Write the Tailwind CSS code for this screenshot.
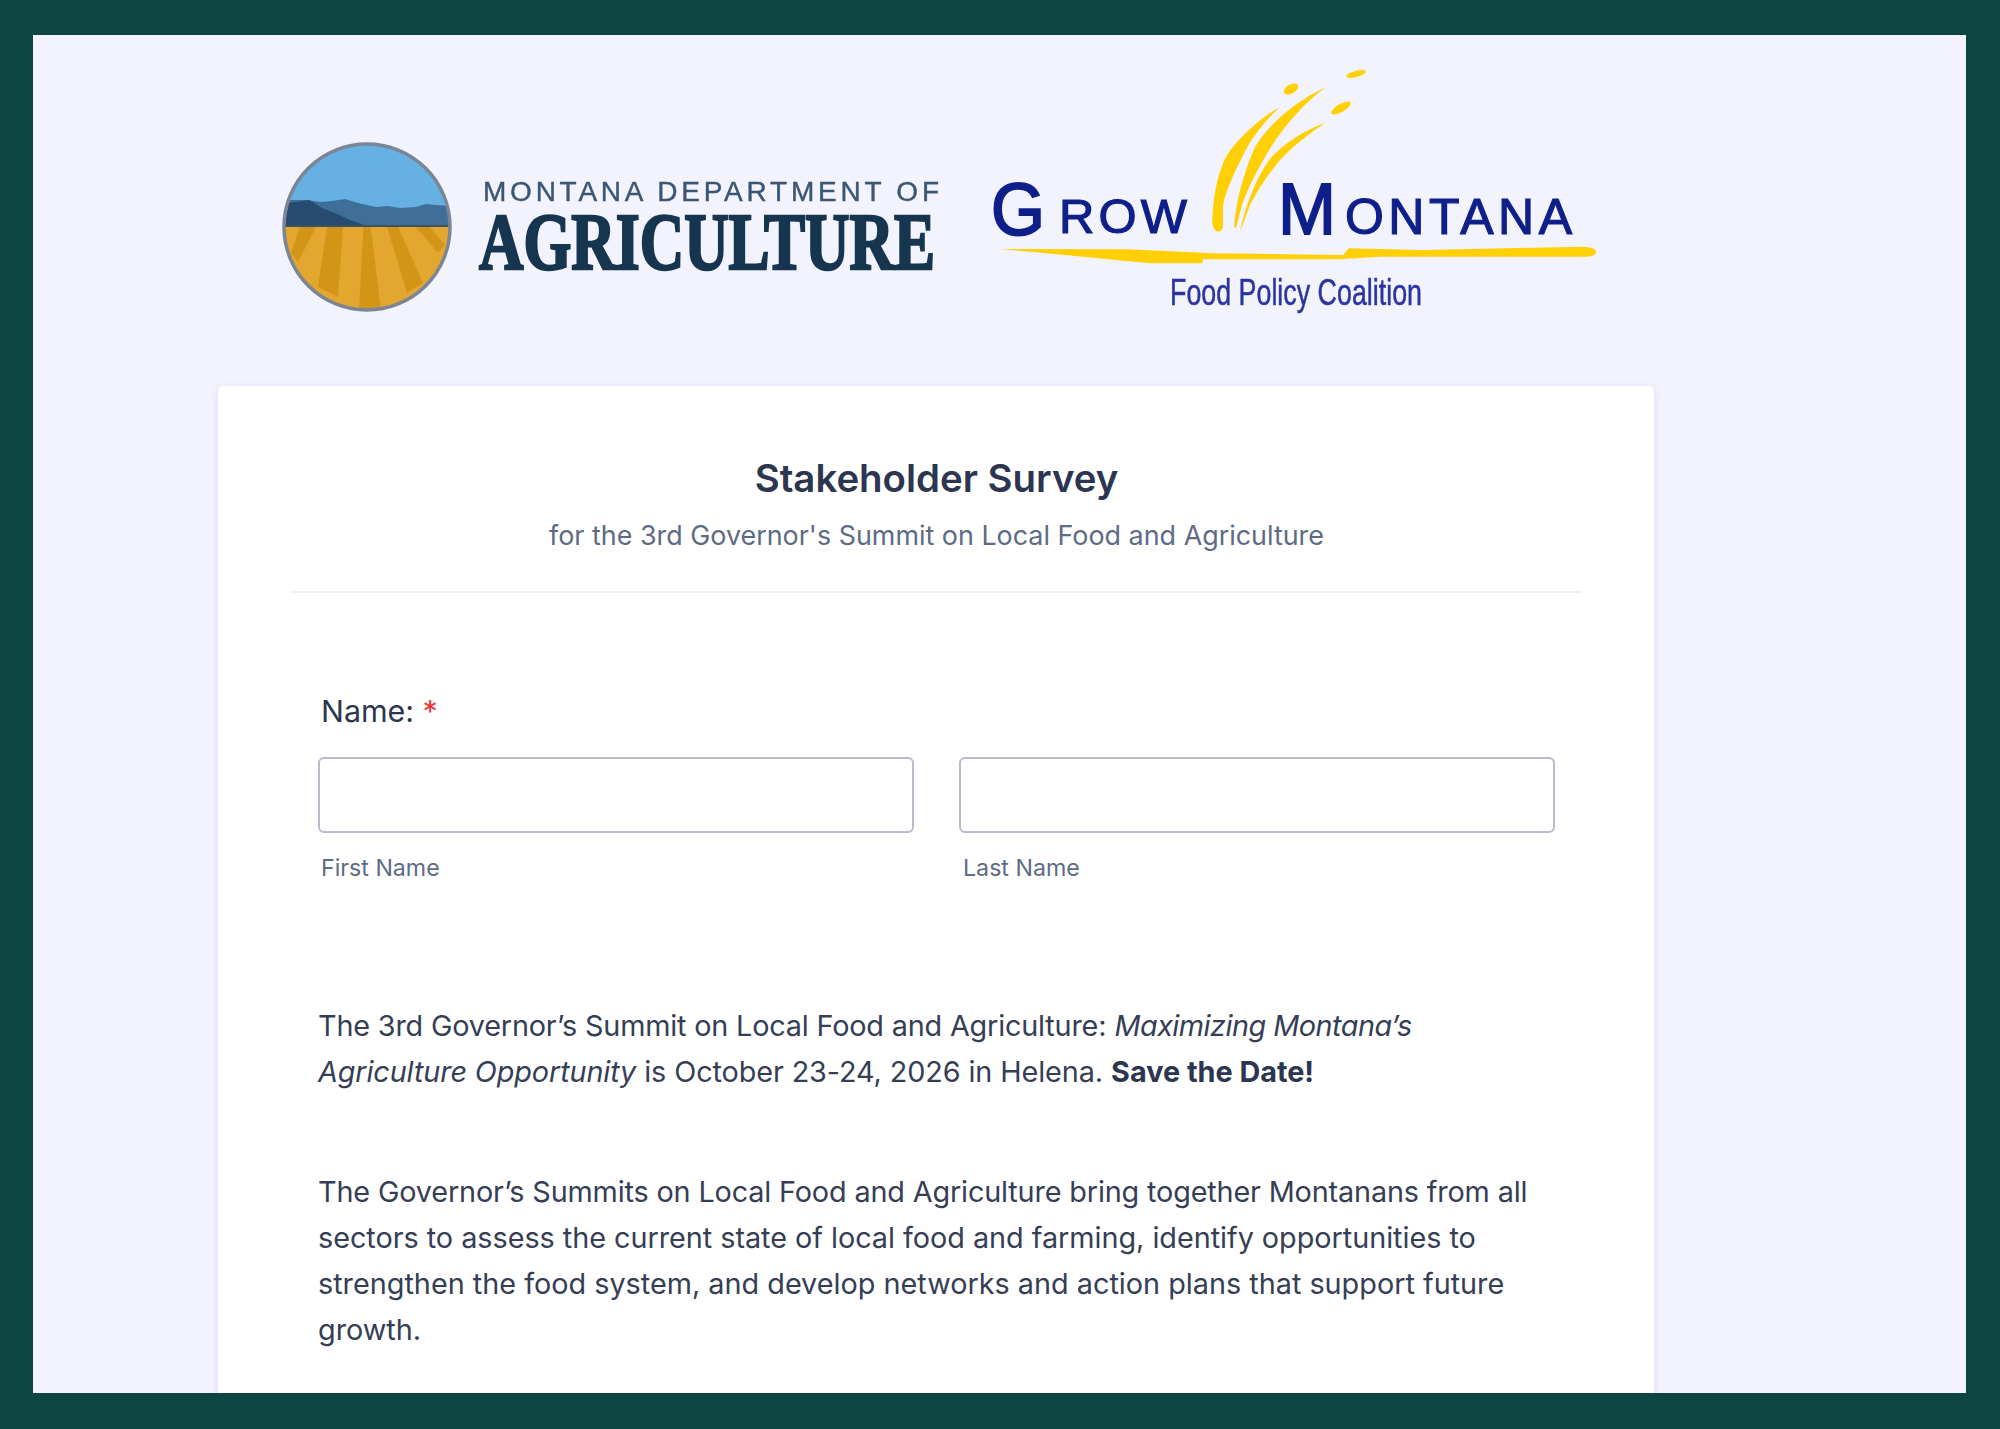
<!DOCTYPE html>
<html lang="en">
  <head>
    <meta charset="UTF-8" />
    <meta name="viewport" content="width=device-width, initial-scale=1.0" />
    <title>Stakeholder Survey</title>
    <script src="https://cdn.jsdelivr.net/npm/@tailwindcss/browser@4"></script>
  </head>
  <body class="bg-[#0d4542] h-[1429px] overflow-hidden antialiased font-['Inter',sans-serif]">
    <div class="pt-[35px] pl-[33px] pr-[34px]">
      <main class="bg-[#f3f3fe] h-[1358px] overflow-hidden">
        <!-- logos -->
        <header class="flex items-start pl-[227px] pt-[15px] mb-[46px]">
          <svg class="mt-[70px] blur-[0.6px]" width="700" height="220" viewBox="0 0 700 220">
            <defs>
              <clipPath id="seal"><circle cx="107" cy="107" r="82" /></clipPath>
            </defs>
            <g clip-path="url(#seal)">
              <rect x="20" y="20" width="175" height="87" fill="#66b0e3" />
              <path d="M20 82 L31 80 L48 80 L60 82 L72 81 L85 79 L98 83 L116 87 L128 86 L140 88 L156 87 L166 84 L176 85 L195 86 V107 H20 Z" fill="#3f6f98" />
              <path d="M20 84 L36 82 L49 80 L62 88 L75 93 L90 100 L107 106 H20 Z" fill="#264a70" />
              <rect x="20" y="106" width="175" height="85" fill="#e3a62e" />
              <rect x="20" y="105" width="175" height="2" fill="#3b5266" />
              <path d="M103.500 107 H110.700 L121 190 H99 Z" fill="#d39518" />
              <path d="M67 107 H83 L78 177 L58 167 Z" fill="#d39518" />
              <path d="M127 107 H138 L163 163 L147 173 Z" fill="#d39518" />
              <path d="M40 107 H56 L38 142 L31 133 Z" fill="#d39518" />
              <path d="M156 107 H170 L185 125 L178 133 Z" fill="#d39518" />
            </g>
            <circle cx="107" cy="107" r="83" fill="none" stroke="#7a8596" stroke-width="3.500" />
            <text x="223" y="81" textLength="456" lengthAdjust="spacing" fill="#3b5672" stroke="#3b5672" stroke-width="0.400" font-family="Liberation Sans" font-size="28">MONTANA DEPARTMENT OF</text>
            <text x="219" y="149" textLength="456" lengthAdjust="spacingAndGlyphs" fill="#16354f" stroke="#16354f" stroke-width="2.500" font-family="Liberation Serif" font-weight="700" font-size="80">AGRICULTURE</text>
          </svg>
          <svg class="blur-[0.5px]" width="660" height="290" viewBox="0 0 660 290">
            <path d="M257.600 181.700 C253 180 251.500 173 252.500 166.700 C254 135 262 110 272 98 C285 82 303 66 320 57 C306 70 295 84 288 96 C276 118 266 140 263 155 L263 177 C262 180 260 182 257.600 181.700 Z" fill="#ffd006" />
            <path d="M274 177 C276 150 283 125 295 97 C310 72 338 50 366 37 C345 52 325 75 311 97 C298 118 287 140 282 155 L276 178 Z" fill="#ffd006" />
            <path d="M280 182 C284 160 295 130 309 110 C325 92 345 80 365 73 C350 83 333 96 320 110 C305 128 295 145 290 155 Z" fill="#ffd006" />
            <ellipse cx="331" cy="39" rx="8" ry="4.500" transform="rotate(-30 331 39)" fill="#ffd006" />
            <ellipse cx="381" cy="58" rx="11" ry="4" transform="rotate(-30 381 58)" fill="#ffd006" />
            <ellipse cx="396" cy="24" rx="10" ry="3" transform="rotate(-15 396 24)" fill="#ffd006" />
            <path d="M40 199 L168 199.300 L252.500 203.300 L383 205 L389 198.300 L463 200 L623 196.700 Q636 197 636 201.700 Q636 206 627 206.700 L421 206.700 L379 209.300 L243 209.300 L242 213.300 L189 213.300 L105 205 Z" fill="#ffd006" />
            <g fill="#0f1f8a" font-family="Liberation Sans">
              <text x="31" y="185" textLength="54" lengthAdjust="spacingAndGlyphs" font-size="74" stroke="#0f1f8a" stroke-width="2">G</text>
              <text x="99" y="183" textLength="128" lengthAdjust="spacing" font-size="49" stroke="#0f1f8a" stroke-width="1.200">ROW</text>
              <text x="318" y="184" textLength="58" lengthAdjust="spacingAndGlyphs" font-size="72" stroke="#0f1f8a" stroke-width="1.800">M</text>
              <text x="385" y="184" textLength="227" lengthAdjust="spacing" font-size="50" stroke="#0f1f8a" stroke-width="1.200">ONTANA</text>
            </g>
            <text x="210" y="255" textLength="252" lengthAdjust="spacingAndGlyphs" fill="#2a35a0" stroke="#2a35a0" stroke-width="0.500" font-family="Liberation Sans" font-size="37">Food Policy Coalition</text>
          </svg>
        </header>

        <!-- survey card -->
        <section class="ml-[185px] w-[1436px] bg-white rounded-md shadow-[0_3px_8px_rgba(140,140,200,0.25)] pt-[68px] pb-20">
          <div class="ml-[73px] mr-[72px] border-b-2 border-[#eef0f4] pb-9 text-center">
            <h1 class="text-[38.4px] leading-[48px] font-semibold text-[#2d3650]">Stakeholder Survey</h1>
            <p class="mt-[13px] text-[26.9px] leading-[40px] text-[#5d6b85]">for the 3rd Governor's Summit on Local Food and Agriculture</p>
          </div>

          <form class="ml-[100px] w-[1237px] mt-[98px]">
            <label class="block pl-[3px] text-[30.4px] leading-[40px] text-[#2d3650]">Name: <span class="text-[#e53935]">*</span></label>
            <div class="grid grid-cols-[596px_596px] gap-x-[45px] mt-[26px]">
              <div>
                <input type="text" class="block w-full h-[76px] bg-white border-2 border-[#b8bcca] rounded-md" />
                <p class="mt-5 pl-[3px] text-[23.2px] leading-[30px] text-[#5d6b85]">First Name</p>
              </div>
              <div>
                <input type="text" class="block w-full h-[76px] bg-white border-2 border-[#b8bcca] rounded-md" />
                <p class="mt-5 pl-1 text-[23.2px] leading-[30px] text-[#5d6b85]">Last Name</p>
              </div>
            </div>

            <p class="mt-[120px] text-[28.8px] leading-[46px] text-[#353e55]">
              <span class="tracking-[-0.18px]">The 3rd Governor’s Summit on Local Food and Agriculture:</span> <em class="tracking-[-0.5px]">Maximizing Montana’s</em> <em class="tracking-[-0.12px]">Agriculture Opportunity</em> <span class="tracking-[-0.1px]">is October 23-24, 2026 in Helena.</span> <strong class="font-bold text-[#2d3650]">Save the Date!</strong>
            </p>
            <p class="mt-[74px] text-[28.8px] leading-[46px] text-[#353e55]">
              <span class="tracking-[-0.15px]">The Governor’s Summits on Local Food and Agriculture bring together Montanans from all</span> <span class="tracking-[-0.03px]">sectors to assess the current state of local food and farming, identify opportunities to</span> strengthen the food system, and develop networks and action plans that support future growth.
            </p>
          </form>
        </section>
      </main>
    </div>
  </body>
</html>
